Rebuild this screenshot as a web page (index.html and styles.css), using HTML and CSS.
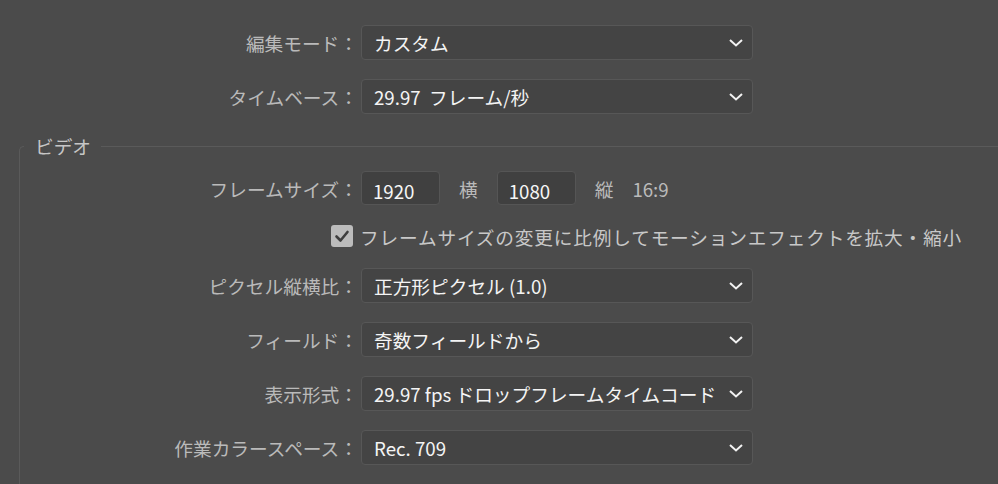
FILE: index.html
```html
<!DOCTYPE html>
<html lang="ja">
<head>
<meta charset="utf-8">
<title>シーケンス設定</title>
<link rel="stylesheet" href="styles.css">
</head>
<body>
<div class="panel">
  <div class="row">
    <div class="label">編集モード：</div>
    <div class="select"><span class="value">カスタム</span><svg class="chev" viewBox="0 0 14 8"><polyline points="1,1 7,6.5 13,1"/></svg></div>
  </div>
  <div class="row">
    <div class="label">タイムベース：</div>
    <div class="select"><span class="value">29.97&nbsp; フレーム/秒</span><svg class="chev" viewBox="0 0 14 8"><polyline points="1,1 7,6.5 13,1"/></svg></div>
  </div>

  <fieldset class="group">
    <legend class="legend">ビデオ</legend>
    <div class="row first">
      <div class="label">フレームサイズ：</div>
      <div class="inputs">
        <div class="num">1920</div>
        <span class="unit">横</span>
        <div class="num">1080</div>
        <span class="unit">縦</span>
        <span class="unit">16:9</span>
      </div>
    </div>
    <div class="check-row">
      <span class="checkbox"><svg viewBox="0 0 22 22"><polyline points="5.5,11.5 9.5,15.5 16.5,7"/></svg></span>
      <span class="check-text">フレームサイズの変更に比例してモーションエフェクトを拡大・縮小</span>
    </div>
    <div class="row">
      <div class="label">ピクセル縦横比：</div>
      <div class="select"><span class="value">正方形ピクセル (1.0)</span><svg class="chev" viewBox="0 0 14 8"><polyline points="1,1 7,6.5 13,1"/></svg></div>
    </div>
    <div class="row">
      <div class="label">フィールド：</div>
      <div class="select"><span class="value">奇数フィールドから</span><svg class="chev" viewBox="0 0 14 8"><polyline points="1,1 7,6.5 13,1"/></svg></div>
    </div>
    <div class="row">
      <div class="label">表示形式：</div>
      <div class="select"><span class="value">29.97 fps ドロップフレームタイムコード</span><svg class="chev" viewBox="0 0 14 8"><polyline points="1,1 7,6.5 13,1"/></svg></div>
    </div>
    <div class="row">
      <div class="label">作業カラースペース：</div>
      <div class="select"><span class="value">Rec. 709</span><svg class="chev" viewBox="0 0 14 8"><polyline points="1,1 7,6.5 13,1"/></svg></div>
    </div>
  </fieldset>
</div>
</body>
</html>
```
FILE: styles.css
```css
html, body {
  margin: 0;
  padding: 0;
  background: #4b4b4b;
  overflow: hidden;
}
body {
  width: 998px;
  height: 484px;
  font-family: "Noto Sans CJK JP", "Noto Sans", sans-serif;
  font-size: 18.7px;
  color: #b9b9b9;
}
.panel {
  padding-top: 25px;
}
.row {
  display: flex;
  align-items: center;
  height: 35px;
  margin-bottom: 19px;
}
.label {
  width: 358px;
  flex: none;
  text-align: right;
  white-space: nowrap;
  margin-right: 3px;
  color: #bababa;
}
.select {
  width: 392px;
  height: 35px;
  box-sizing: border-box;
  border: 1px solid #575757;
  border-radius: 4px;
  background: #444444;
  display: flex;
  align-items: center;
  justify-content: space-between;
  padding: 0 9px 0 12px;
}
.value {
  color: #f4f4f4;
  font-weight: 400;
  white-space: nowrap;
}
.chev {
  width: 14px;
  height: 8px;
  flex: none;
  fill: none;
  stroke: #f2f2f2;
  stroke-width: 2;
}
.group {
  margin: 14px -30px 0 19px;
  padding: 0;
  border: 1px solid #5a5a5a;
  border-right: none;
  border-radius: 5px 0 0 0;
  min-width: 0;
}
.legend {
  margin-left: 4px;
  padding: 0 10px 0 11px;
  color: #c6c6c6;
  line-height: 26px;
}
.group .label {
  width: 338px;
}
.group .row.first {
  margin-top: 12px;
  height: 34px;
  margin-bottom: 0;
}
.inputs {
  display: flex;
  align-items: center;
  gap: 19px;
}
.num {
  width: 79px;
  height: 34px;
  box-sizing: border-box;
  border: 1px solid #555555;
  border-radius: 4px;
  background: #404040;
  color: #f6f6f6;
  font-weight: 400;
  padding: 6px 0 0 11px;
  line-height: 26px;
}
.unit {
  color: #bababa;
}
.check-row {
  display: flex;
  align-items: center;
  height: 26px;
  margin: 18px 0 19px 0;
  padding-left: 311px;
}
.checkbox {
  width: 22px;
  height: 22px;
  border-radius: 3px;
  background: #bcbcbc;
  flex: none;
  display: block;
  margin-right: 7px;
}
.checkbox svg {
  width: 22px;
  height: 22px;
  display: block;
  fill: none;
  stroke: #3e3e3e;
  stroke-width: 2.6;
  stroke-linecap: round;
  stroke-linejoin: round;
}
.check-text {
  color: #c8c8c8;
  white-space: nowrap;
  letter-spacing: 0.8px;
}
```
